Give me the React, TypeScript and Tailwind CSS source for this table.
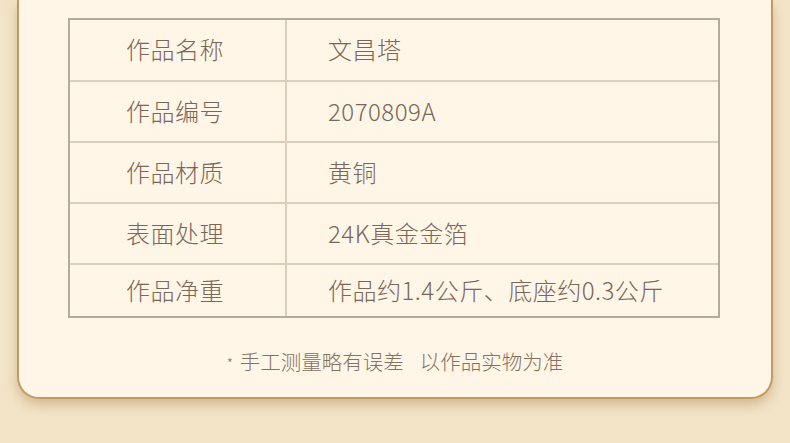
const rows = [
  { label: "作品名称", value: "文昌塔", h: "h-[60px]" },
  { label: "作品编号", value: "2070809A", h: "h-[61px]" },
  { label: "作品材质", value: "黄铜", h: "h-[61px]" },
  { label: "表面处理", value: "24K真金金箔", h: "h-[61px]" },
  { label: "作品净重", value: "作品约1.4公斤、底座约0.3公斤", h: "h-[53px]" },
];

const App = () => {
  return (
    <div
      className="w-[790px] h-[443px] overflow-hidden bg-[#f3e4c7] px-[17px]"
      style={{ fontFamily: '"Noto Sans CJK SC", "Noto Sans", sans-serif' }}
    >
      <div className="w-[756px] bg-[#fff6e8] border-x-2 border-b-2 border-[#c59a62] rounded-b-[22px] shadow-[0_6px_12px_rgba(140,95,40,0.32)] pt-[18px] pb-[22px]">
        {/* Spec table */}
        <div className="ml-[49px] w-[652px] border-2 border-[#b6a99d] text-[24px] tracking-[0.5px] font-light text-[#7b6657]">
          {rows.map((row, i) => (
            <div
              key={row.label}
              className={`flex ${row.h} ${i > 0 ? "border-t-2 border-[#dccdbd]" : ""}`}
            >
              <div className="w-[217px] flex items-center justify-center pr-[5px] pb-[2px] border-r-2 border-[#dccdbd] leading-none">
                {row.label}
              </div>
              <div className="flex-1 flex items-center pl-[41px] pb-[2px] leading-none">
                {row.value}
              </div>
            </div>
          ))}
        </div>

        {/* Note */}
        <div className="mt-[29px] h-[28px] flex items-center justify-center text-[20.5px] font-light text-[#86705f] leading-none">
          <span className="text-[14px] mr-[7px] translate-y-[2px]">*</span>
          <span>手工测量略有误差</span>
          <span className="ml-[16px]">以作品实物为准</span>
        </div>
      </div>
    </div>
  );
};

export default App;
